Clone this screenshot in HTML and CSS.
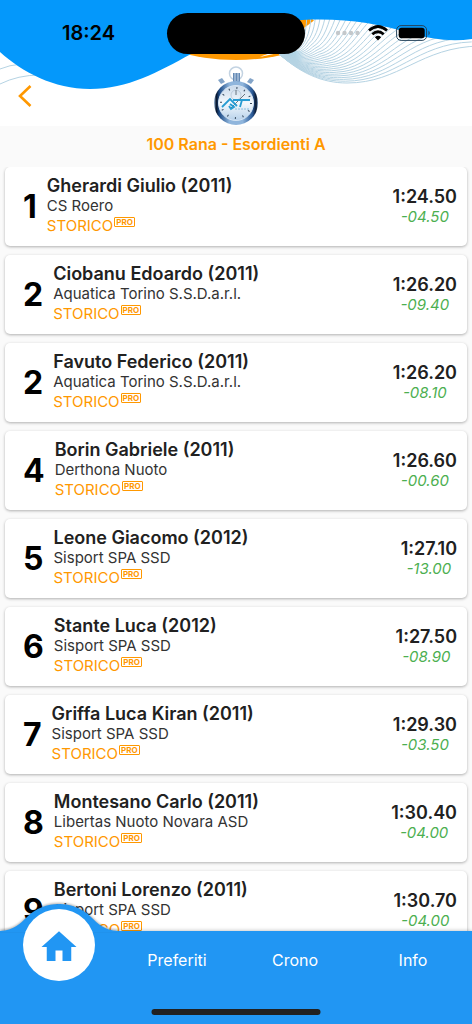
FILE: index.html
```html
<!DOCTYPE html>
<html lang="it">
<head>
	<meta charset="utf-8">
	<meta name="viewport" content="width=device-width, initial-scale=1">
	<title>100 Rana - Esordienti A</title>
	<link rel="stylesheet" href="styles.css">
</head>
<body>
	<header class="header">
		<svg class="header-bg" viewBox="0 0 472 126" preserveAspectRatio="none" aria-hidden="true">
			<ellipse cx="236" cy="30" rx="82" ry="30" fill="#ff9800"/>
			<path d="M260 57C274 50 300 50 304 28L316 19L480 19V46C420 48 400 83 347 83C318 83 300 72 278 53Z" fill="#fff"/>
			<path d="M276 51H304C304 58 302 64 296 67Q286 61 276 51Z" fill="url(#glow)"/>
			<g id="waves" fill="none" stroke="#b5d3e3" stroke-width="1"></g>
			<path d="M0 69Q9 65 22 64M0 84Q18 75 40 75" fill="none" stroke="#b5d3e3"/>
			<path d="M0 0H472V39C450 42 431 39 410 33C375 23 345 18 302 20C260 23 225 35 191 54C158 72 128 89 90 89C54 89 22 72 0 52Z" fill="#0498fb"/>
			<defs>
				<radialGradient id="glow" gradientUnits="userSpaceOnUse" cx="288" cy="56" r="16">
					<stop offset="0" stop-color="#5fc3ed"/>
					<stop offset="1" stop-color="#ffffff"/>
				</radialGradient>
			</defs>
		</svg>
		<div class="status-bar">
			<span class="clock">18:24</span>
			<div class="island"></div>
			<div class="status-icons">
				<svg width="25" height="6" viewBox="0 0 25 6" fill="#c4c8cb"><circle cx="3" cy="3" r="2.2"/><circle cx="9.500" cy="3" r="2.2"/><circle cx="16" cy="3" r="2.2"/><circle cx="22.500" cy="3" r="2.2"/></svg>
				<svg class="wifi" width="20" height="16" viewBox="0 0 20 16" fill="none" stroke="#000" stroke-width="2.700"><path d="M1 5.600Q10-2.600 19 5.600M4.300 9.300Q10 4.200 15.700 9.300"/><path d="M6.900 12.200Q10 9.400 13.100 12.200L10 15.500Z" fill="#000" stroke="none"/></svg>
				<svg width="35" height="16" viewBox="0 0 35 16"><rect x=".6" y=".6" width="30" height="14.800" rx="4.500" fill="none" stroke="#25435a"/><rect x="2.700" y="2.700" width="26" height="10.600" rx="2.800"/><path d="M32.500 5.500Q35 8 32.500 10.500Z" fill="#25435a"/></svg>
			</div>
		</div>
		<div class="toolbar">
			<button class="back" aria-label="Indietro">
				<svg width="14" height="22" viewBox="0 0 14 22"><path d="M12.500 1L2 11L12.500 21" fill="none" stroke="#ff9800" stroke-width="2.600"/></svg>
			</button>
			<svg class="logo" width="46" height="60" viewBox="0 0 46 60" role="img" aria-label="AT">
				<defs>
					<linearGradient id="rim" x1="0" x2="1" y1="0" y2="0">
						<stop offset="0" stop-color="#9fbfe0"/>
						<stop offset=".05" stop-color="#07142a"/>
						<stop offset=".12" stop-color="#1c4a85"/>
						<stop offset=".35" stop-color="#8fb5dc"/>
						<stop offset=".65" stop-color="#8fb5dc"/>
						<stop offset=".87" stop-color="#2a5a98"/>
						<stop offset=".96" stop-color="#07142a"/>
						<stop offset="1" stop-color="#7fa3cc"/>
					</linearGradient>
					<linearGradient id="face" x1="0" x2="0" y1="0" y2="1">
						<stop offset="0" stop-color="#c9d9ea"/>
						<stop offset=".5" stop-color="#f4f9fd"/>
						<stop offset="1" stop-color="#b7d1ea"/>
					</linearGradient>
				</defs>
				<circle cx="23" cy="7.500" r="6.500" fill="none" stroke="#c3d3e2" stroke-width="1.500"/>
				<path d="M20 7h7v10h-7z" fill="#6489b4"/>
				<path d="M22 7v8M25 7v8" stroke="#c8d9eb"/>
				<path d="M5 14l4-2 3 4-4 2zM41 14l-4-2-3 4 4 2z" fill="#83a4c8"/>
				<circle cx="23" cy="37" r="22" fill="url(#rim)"/>
				<circle cx="23" cy="37" r="17.500" fill="url(#face)" stroke="#d6e5f4" stroke-width="1"/>
				<circle cx="23" cy="37" r="15" fill="none" stroke="#34465a" stroke-width="2" stroke-dasharray="1 6.854"/>
				<circle cx="23" cy="29" r="5" fill="none" stroke="#aebfd0" stroke-width=".7"/>
				<path d="M23 24v5M17 43L32 28" stroke="#4a5561" stroke-width=".8"/>
				<path d="M9 41L17 33L24 40M17 38l4 3-3 2-2-3M20 34H37M29 34L27 41" fill="none" stroke="#269bd2" stroke-width="1.800"/>
				<path d="M22 43H36" stroke="#72b5db" stroke-width=".8" stroke-dasharray="2 1"/>
			</svg>
		</div>
	</header>

	<h1 class="title">100 Rana - Esordienti A</h1>

	<main class="list">
		<article class="card">
			<span class="rank">1</span>
			<div class="athlete">
				<h2 class="name">Gherardi Giulio (2011)</h2>
				<p class="club">CS Roero</p>
				<a class="history" href="#">STORICO<span class="pro">PRO</span></a>
			</div>
			<div class="result"><p class="time">1:24.50</p><p class="diff">-04.50</p></div>
		</article>
		<article class="card">
			<span class="rank">2</span>
			<div class="athlete">
				<h2 class="name">Ciobanu Edoardo (2011)</h2>
				<p class="club">Aquatica Torino S.S.D.a.r.l.</p>
				<a class="history" href="#">STORICO<span class="pro">PRO</span></a>
			</div>
			<div class="result"><p class="time">1:26.20</p><p class="diff">-09.40</p></div>
		</article>
		<article class="card">
			<span class="rank">2</span>
			<div class="athlete">
				<h2 class="name">Favuto Federico (2011)</h2>
				<p class="club">Aquatica Torino S.S.D.a.r.l.</p>
				<a class="history" href="#">STORICO<span class="pro">PRO</span></a>
			</div>
			<div class="result"><p class="time">1:26.20</p><p class="diff">-08.10</p></div>
		</article>
		<article class="card">
			<span class="rank">4</span>
			<div class="athlete">
				<h2 class="name">Borin Gabriele (2011)</h2>
				<p class="club">Derthona Nuoto</p>
				<a class="history" href="#">STORICO<span class="pro">PRO</span></a>
			</div>
			<div class="result"><p class="time">1:26.60</p><p class="diff">-00.60</p></div>
		</article>
		<article class="card">
			<span class="rank">5</span>
			<div class="athlete">
				<h2 class="name">Leone Giacomo (2012)</h2>
				<p class="club">Sisport SPA SSD</p>
				<a class="history" href="#">STORICO<span class="pro">PRO</span></a>
			</div>
			<div class="result"><p class="time">1:27.10</p><p class="diff">-13.00</p></div>
		</article>
		<article class="card">
			<span class="rank">6</span>
			<div class="athlete">
				<h2 class="name">Stante Luca (2012)</h2>
				<p class="club">Sisport SPA SSD</p>
				<a class="history" href="#">STORICO<span class="pro">PRO</span></a>
			</div>
			<div class="result"><p class="time">1:27.50</p><p class="diff">-08.90</p></div>
		</article>
		<article class="card">
			<span class="rank">7</span>
			<div class="athlete">
				<h2 class="name">Griffa Luca Kiran (2011)</h2>
				<p class="club">Sisport SPA SSD</p>
				<a class="history" href="#">STORICO<span class="pro">PRO</span></a>
			</div>
			<div class="result"><p class="time">1:29.30</p><p class="diff">-03.50</p></div>
		</article>
		<article class="card">
			<span class="rank">8</span>
			<div class="athlete">
				<h2 class="name">Montesano Carlo (2011)</h2>
				<p class="club">Libertas Nuoto Novara ASD</p>
				<a class="history" href="#">STORICO<span class="pro">PRO</span></a>
			</div>
			<div class="result"><p class="time">1:30.40</p><p class="diff">-04.00</p></div>
		</article>
		<article class="card">
			<span class="rank">9</span>
			<div class="athlete">
				<h2 class="name">Bertoni Lorenzo (2011)</h2>
				<p class="club">Sisport SPA SSD</p>
				<a class="history" href="#">STORICO<span class="pro">PRO</span></a>
			</div>
			<div class="result"><p class="time">1:30.70</p><p class="diff">-04.00</p></div>
		</article>
	</main>

	<nav class="tabs">
		<a class="tab home" href="#" aria-label="Home">
			<svg class="bump" width="118" height="29" viewBox="0 0 118 29" aria-hidden="true"><path d="M0 28C14 27 20 21 27 14C36 5 47 1 59 1S82 5 91 14C98 21 104 27 118 28V29H0Z" fill="#2196f3"/></svg>
			<span class="home-circle">
				<svg width="42" height="42" viewBox="0 0 24 24" fill="#2196f3"><path d="M10 20v-6h4v6h5v-8h3L12 3 2 12h3v8z"/></svg>
			</span>
		</a>
		<a class="tab" href="#">Preferiti</a>
		<a class="tab" href="#">Crono</a>
		<a class="tab" href="#">Info</a>
		<span class="home-indicator"></span>
	</nav>

	<script>
		//blend the waves from the steep inner line to the flat outer one
		const total = 26;
		const mix = (a,b,t)=>(a+(b-a)*t).toFixed(1);
		let d = "";
		for(let i=0;i<total;i++){
			const t = i/(total-1);
			const t3 = t*t*t;
			d += `M278 53C${mix(292,300,t)} ${mix(56,73,t)} ${mix(302,322,t)} ${mix(46,83,t)} ${mix(304,347,t)} ${mix(38,83,t)}`;
			d += `C${mix(306,400,t)} ${mix(30,83,t)} ${mix(307,420,t)} ${mix(20,47,t3)} ${mix(307,480,Math.pow(t,1.2))} ${mix(10,46,t3)}`;
		}
		const line = document.createElementNS("http://www.w3.org/2000/svg","path");
		line.setAttribute("d",d);
		document.getElementById("waves").appendChild(line);
	</script>
</body>
</html>
```
FILE: styles.css
```css
*{
	padding: 0;
	margin: 0;
	box-sizing: border-box;
}
body{
	height: 100vh;
	display: flex;
	flex-direction: column;
	background: #fafafa;
	color: #212121;
	font-family: "Inter", sans-serif;
	overflow: hidden;
}
a{
	text-decoration: none;
}
.header{
	position: relative;
	background: #ffffff;
}
.header-bg{
	position: absolute;
	top: 0;
	left: 0;
	width: 100%;
	height: 100%;
}
.status-bar{
	position: relative;
	height: 66px;
	display: grid;
	grid-template-columns: 1fr 138px 1fr;
	align-items: center;
}
.clock{
	color: #000000;
	font-size: 20px;
	font-weight: 600;
	text-align: center;
	padding-left: 10px;
}
.island{
	height: 41px;
	border-radius: 21px;
	background: #000000;
}
.status-icons{
	display: flex;
	align-items: center;
	justify-content: center;
	gap: 8px;
	padding-right: 12px;
}
.toolbar{
	position: relative;
	height: 60px;
	display: grid;
	grid-template-columns: 1fr auto 1fr;
	align-items: center;
}
.back{
	justify-self: start;
	height: 44px;
	padding: 0 18px;
	border: none;
	background: none;
	display: flex;
	align-items: center;
}
.title{
	color: #ff9800;
	font-size: 16px;
	font-weight: 600;
	line-height: 20px;
	text-align: center;
	padding: 8px 0 13px;
}
.list{
	flex: 1;
	min-height: 0;
	overflow-y: auto;
	scrollbar-width: none;
	display: flex;
	flex-direction: column;
	gap: 9px;
	padding: 0 5px;
}
.card{
	flex: none;
	display: flex;
	align-items: center;
	gap: 10px;
	padding: 9px 10px 10px 18px;
	border-radius: 5px;
	background: #ffffff;
	box-shadow: 0 1px 3px rgba(0, 0, 0, 0.3);
}
.rank{
	color: #000000;
	font-size: 32px;
	font-weight: 700;
}
.athlete{
	flex: 1;
}
.name{
	font-size: 18px;
	font-weight: 600;
	line-height: 20px;
}
.club,
.history{
	font-size: 15px;
	line-height: 20px;
}
.club{
	color: #333333;
}
.history{
	display: flex;
	color: #ff9800;
}
.pro{
	align-self: flex-start;
	margin: 1px 0 0 1px;
	padding: 0 1px;
	border: 1px solid #ff9800;
	border-radius: 1px;
	font-size: 8px;
	font-weight: 700;
	line-height: 8px;
}
.result{
	padding-top: 2px;
	text-align: center;
}
.time{
	font-size: 18px;
	font-weight: 600;
	line-height: 20px;
}
.diff{
	color: #4caf50;
	font-size: 15px;
	font-style: italic;
	line-height: 20px;
}
.tabs{
	position: relative;
	height: 93px;
	display: grid;
	grid-template-columns: repeat(4, 1fr);
	align-items: start;
	background: #2196f3;
	box-shadow: 0 0 4px rgba(0, 0, 0, 0.3);
}
.tab{
	position: relative;
	height: 58px;
	display: flex;
	align-items: center;
	justify-content: center;
	color: #ffffff;
	font-size: 16px;
}
.bump{
	position: absolute;
	bottom: 100%;
	left: 50%;
	transform: translateX(-50%);
	margin-bottom: -1px;
	filter: drop-shadow(0 -1px 1px rgba(0, 0, 0, 0.3));
}
.home-circle{
	position: absolute;
	top: -22px;
	width: 72px;
	height: 72px;
	padding-top: 4px;
	border-radius: 50%;
	background: #ffffff;
	display: flex;
	align-items: center;
	justify-content: center;
}
.home-indicator{
	position: absolute;
	bottom: 9px;
	left: 50%;
	transform: translateX(-50%);
	width: 169px;
	height: 6px;
	border-radius: 3px;
	background: #212121;
}
```
